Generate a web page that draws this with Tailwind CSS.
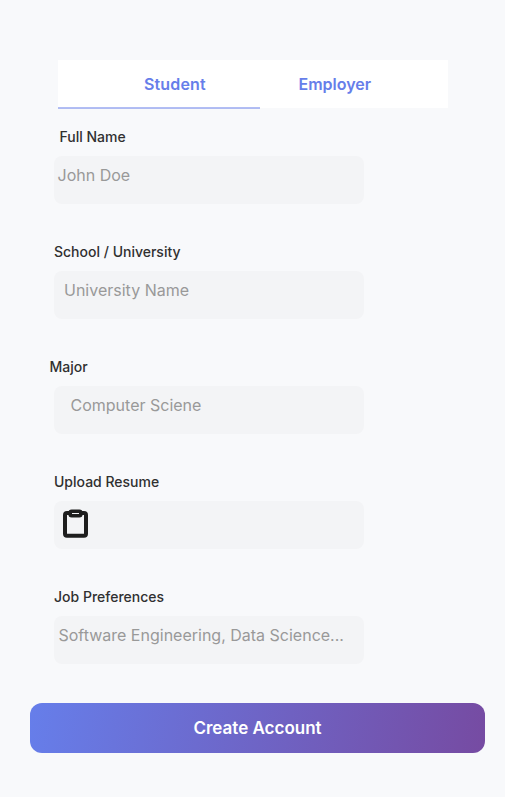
<!DOCTYPE html>
<html lang="en"><head><meta charset="utf-8"><title>Create Account</title>
<script src="https://cdn.jsdelivr.net/npm/@tailwindcss/browser@4"></script></head>
<body class="bg-[#f8f9fb] font-['Inter',sans-serif]">
<main class="w-[505px] h-[797px] pt-[60px] overflow-hidden">
<nav class="ml-[58px] w-[390px] h-12 bg-white flex text-base leading-6 font-semibold text-[#667eea]">
<button type="button" class="w-[202px] h-[49px] pl-[86px] tracking-[0.01em] text-left border-b-2 border-[#667eea]/50">Student</button>
<button type="button" class="pl-[38.5px] text-left">Employer</button>
</nav>
<form class="pt-[19px] text-[#303030]">
<div class="flex flex-col gap-[38px]">
<div class="h-[77px]"><label class="block pl-[59.5px] h-[29px] text-sm leading-5 font-medium">Full Name</label><div class="ml-[54px] w-[310px] h-12 rounded-lg bg-[#f3f4f6] pl-[3.5px] pt-[7px] text-base leading-6 text-[#999]">John Doe</div></div>
<div class="h-[77px]"><label class="block pl-[54px] h-[29px] text-sm leading-5 font-medium">School / University</label><div class="ml-[54px] w-[310px] h-12 rounded-lg bg-[#f3f4f6] pl-[10px] pt-[7px] text-base leading-6 text-[#999]">University Name</div></div>
<div class="h-[77px]"><label class="block pl-[49.5px] h-[29px] text-sm leading-5 font-medium">Major</label><div class="ml-[54px] w-[310px] h-12 rounded-lg bg-[#f3f4f6] pl-[16.5px] pt-[7px] text-base leading-6 text-[#999]">Computer Sciene</div></div>
<div class="h-[77px]"><label class="block pl-[54px] h-[29px] text-sm leading-5 font-medium">Upload Resume</label><div class="ml-[54px] w-[310px] h-12 rounded-lg bg-[#f3f4f6] pl-[8px] pt-[7px]">
<svg class="block" width="28" height="32" viewBox="0 0 28 32" fill="none" stroke="#1e1e1e" stroke-width="4" stroke-linejoin="round"><path d="M8.500 5H5a2 2 0 0 0-2 2v18.700a2 2 0 0 0 2 2h17a2 2 0 0 0 2-2V7a2 2 0 0 0-2-2h-3.500"/><rect x="8.200" y="3.200" width="10.600" height="4.600" rx="1.500" stroke-width="3.600"/></svg>
</div></div>
<div class="h-[77px]"><label class="block pl-[54px] h-[29px] text-sm leading-5 font-medium">Job Preferences</label><div class="ml-[54px] w-[310px] h-12 rounded-lg bg-[#f3f4f6] pl-[4.5px] pt-[7px] text-base leading-6 text-[#999] whitespace-nowrap">Software Engineering, Data Science...</div></div>
</div>
<button type="button" class="block mt-[39px] ml-[30px] w-[455px] h-[50px] pt-px rounded-xl bg-[linear-gradient(99deg,#667eea_0%,#764ba2_100%)] text-white text-[17px] font-semibold">Create Account</button>
</form>
</main></body></html>
